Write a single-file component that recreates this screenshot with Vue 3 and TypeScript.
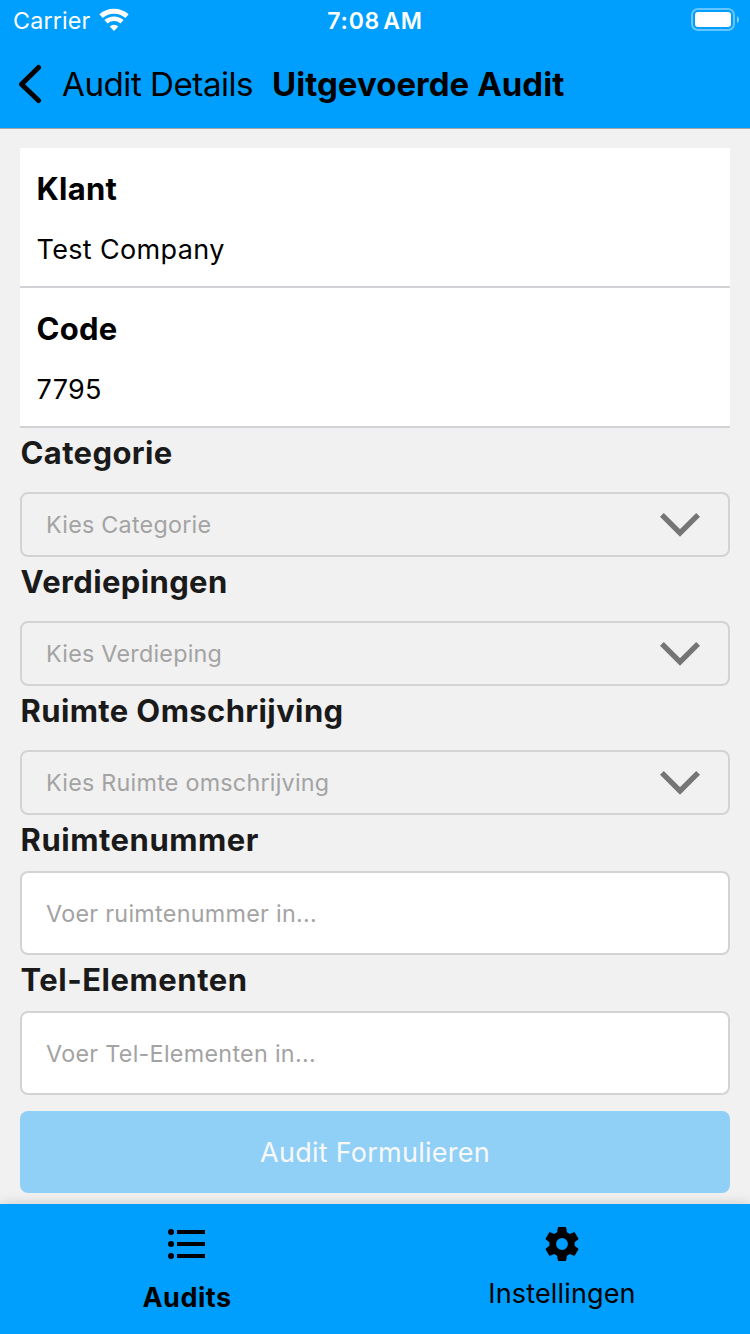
<script setup lang="ts">
import { ref } from 'vue'

interface Info { title: string; value: string; v: string }
interface Field { label: string; hint: string; kind: 'select' | 'input'; l: string }

const info: Info[] = [
  { title: 'Klant', value: 'Test Company', v: 'company' },
  { title: 'Code', value: '7795', v: 'number' },
]
const fields: Field[] = [
  { label: 'Categorie', hint: 'Kies Categorie', kind: 'select', l: 'normal' },
  { label: 'Verdiepingen', hint: 'Kies Verdieping', kind: 'select', l: 'normal' },
  { label: 'Ruimte Omschrijving', hint: 'Kies Ruimte omschrijving', kind: 'select', l: 'normal' },
  { label: 'Ruimtenummer', hint: 'Voer ruimtenummer in...', kind: 'input', l: 'wide' },
  { label: 'Tel-Elementen', hint: 'Voer Tel-Elementen in...', kind: 'input', l: 'wide' },
]
const activeTab = ref<'audits' | 'settings'>('audits')
</script>

<template>
  <div class="screen">
    <header class="top">
      <div class="status">
        <div class="carrier">
          <span class="carrier-name">Carrier</span>
          <svg class="wifi" width="30" height="24" viewBox="0 0 30 24">
            <g fill="none" stroke="#fff">
              <path d="M2 8.2A19.7 19.7 0 0 1 28 8.2" stroke-width="5" />
              <path d="M6.95 13.85A12.2 12.2 0 0 1 23.05 13.85" stroke-width="4.6" />
            </g>
            <path d="M15 23L10.7 18.4A6.3 6.3 0 0 1 19.3 18.4Z" fill="#fff" />
          </svg>
        </div>
        <span class="clock">7:08 AM</span>
        <svg class="battery" width="50" height="24" viewBox="0 0 50 24">
          <rect x="2" y="1" width="42" height="21" rx="6" fill="none" stroke="#fff" stroke-opacity=".4" stroke-width="2" />
          <rect x="5" y="4" width="36" height="15" rx="3" fill="#fff" />
          <path d="M47 8Q49 9 49 11.5T47 15Z" fill="#fff" fill-opacity=".5" />
        </svg>
      </div>
      <nav class="nav">
        <svg class="back" width="26" height="42" viewBox="0 0 26 42">
          <path d="M22.5 4.5L5.5 21.2L22.5 37.5" fill="none" stroke="#000" stroke-width="5" stroke-linecap="round" stroke-linejoin="round" />
        </svg>
        <span class="back-label">Audit Details</span>
        <h1 class="title">Uitgevoerde Audit</h1>
      </nav>
    </header>

    <main class="content">
      <section v-for="row in info" :key="row.title" class="info">
        <h2 class="info-title">{{ row.title }}</h2>
        <p class="info-value" :class="row.v">{{ row.value }}</p>
      </section>

      <div v-for="f in fields" :key="f.label" class="field" :class="f.kind">
        <div class="label" :class="f.l">{{ f.label }}</div>
        <div class="box">
          <span class="hint">{{ f.hint }}</span>
          <svg v-if="f.kind === 'select'" class="chevron" width="40" height="26" viewBox="0 0 40 26">
            <path d="M1.9 2.8L20 20.9L38.1 2.8" fill="none" stroke="#757575" stroke-width="5.4" />
          </svg>
        </div>
      </div>

      <button class="submit" disabled><span>Audit Formulieren</span></button>
    </main>

    <footer class="tabs">
      <div class="tab" :class="{ active: activeTab === 'audits' }" @click="activeTab = 'audits'">
        <svg width="48" height="48" viewBox="0 0 24 24">
          <path d="M7 5h14v2H7zM7 11h14v2H7zM7 17h14v2H7z" />
          <circle cx="4" cy="6" r="1.5" /><circle cx="4" cy="12" r="1.5" /><circle cx="4" cy="18" r="1.5" />
        </svg>
        <span class="tab-label">Audits</span>
      </div>
      <div class="tab" :class="{ active: activeTab === 'settings' }" @click="activeTab = 'settings'">
        <svg width="48" height="48" viewBox="-2.2 -2.2 28.4 28.4">
          <path d="M12 15.5A3.5 3.5 0 0 1 8.5 12 3.5 3.5 0 0 1 12 8.5 3.5 3.5 0 0 1 15.5 12 3.5 3.5 0 0 1 12 15.5M19.43 12.97C19.47 12.65 19.5 12.33 19.5 12S19.47 11.34 19.43 11L21.54 9.37C21.73 9.22 21.78 8.95 21.66 8.73L19.66 5.27C19.54 5.05 19.27 4.96 19.05 5.05L16.56 6.05C16.04 5.66 15.5 5.32 14.87 5.07L14.5 2.42C14.46 2.18 14.25 2 14 2H10C9.75 2 9.54 2.18 9.5 2.42L9.13 5.07C8.5 5.32 7.96 5.66 7.44 6.05L4.95 5.05C4.73 4.96 4.46 5.05 4.34 5.27L2.34 8.73C2.21 8.95 2.27 9.22 2.46 9.37L4.57 11C4.53 11.34 4.5 11.67 4.5 12S4.53 12.65 4.57 12.97L2.46 14.63C2.27 14.78 2.21 15.05 2.34 15.27L4.34 18.73C4.46 18.95 4.73 19.03 4.95 18.95L7.44 17.94C7.96 18.34 8.5 18.68 9.13 18.93L9.5 21.58C9.54 21.82 9.75 22 10 22H14C14.25 22 14.46 21.82 14.5 21.58L14.87 18.93C15.5 18.67 16.04 18.34 16.56 17.94L19.05 18.95C19.27 19.03 19.54 18.95 19.66 18.73L21.66 15.27C21.78 15.05 21.73 14.78 21.54 14.63Z" />
        </svg>
        <span class="tab-label">Instellingen</span>
      </div>
    </footer>
  </div>
</template>

<style>
body { margin: 0; background: #f1f1f1; }
</style>

<style scoped>
.screen {
  width: 750px;
  height: 1334px;
  display: flex;
  flex-direction: column;
  overflow: hidden;
  background: #f1f1f1;
  color: #000;
  font-family: Inter, "Liberation Sans", sans-serif;
  white-space: nowrap;
}
h1, h2, p { margin: 0; }
svg { display: block; flex: none; }
.top {
  box-sizing: border-box;
  height: 129px;
  flex: none;
  background: #009ffd;
  border-bottom: 1px solid #a5a7aa;
}
.status {
  height: 40px;
  display: grid;
  grid-template-columns: 1fr auto 1fr;
  align-items: center;
  color: #fff;
  font-size: 23.3px;
}
.carrier { display: flex; align-items: center; padding-left: 13px; gap: 9px; }
.carrier-name { width: 77px; letter-spacing: .15px; }
.clock { padding-top: 2px; font-weight: 600; font-size: 23px; letter-spacing: .8px; word-spacing: -3.5px; }
.battery { justify-self: end; margin-right: 10px; }
.nav { height: 88px; display: flex; align-items: center; padding-left: 16px; }
.back-label { width: 210px; margin-left: 20px; font-size: 33.2px; line-height: 88px; letter-spacing: -.5px; }
.title { font-size: 33px; line-height: 88px; font-weight: 700; letter-spacing: .03px; }
.content { padding: 19px 20px 0; height: 1056px; flex: none; }
.info {
  box-sizing: border-box;
  height: 140px;
  padding: 16px 16.5px 0;
  background: #fff;
  border-bottom: 2px solid #d1d1d6;
}
.info-title { font-size: 31px; line-height: 50px; font-weight: 700; letter-spacing: .25px; }
.info-value { font-size: 27px; line-height: 40px; margin-top: 16px; letter-spacing: .35px; }
.label {
  height: 64px;
  padding-left: .5px;
  color: #1a1a1a;
  font-size: 31px;
  line-height: 50px;
  font-weight: 700;
  letter-spacing: .38px;
}
.label.wide { letter-spacing: .53px; }
.input .label { height: 56px; }
.box {
  box-sizing: border-box;
  height: 65px;
  display: flex;
  align-items: center;
  justify-content: space-between;
  padding: 0 28px 0 24px;
  border: 2px solid #d3d3d3;
  border-radius: 8px;
}
.input .box { height: 84px; background: #fff; }
.hint { color: #a3a3a3; font-size: 23.3px; letter-spacing: .25px; }
.input .hint { letter-spacing: .3px; }
.submit {
  display: block;
  width: 710px;
  height: 82px;
  margin-top: 16px;
  padding: 0;
  border: 0;
  border-radius: 8px;
  background: #91d0f6;
  color: #f8f8f8;
  font-family: inherit;
  font-size: 27px;
  letter-spacing: .25px;
}
.tabs {
  margin-top: auto;
  height: 130px;
  flex: none;
  display: grid;
  grid-template-columns: 374px 376px;
  background: #009ffd;
  box-shadow: 0 0 12px rgba(0, 0, 0, .16);
}
.tab { display: flex; flex-direction: column; align-items: center; padding-top: 16px; }
.tab-label { font-size: 27px; line-height: 40px; margin-top: 6px; letter-spacing: .15px; }
.active .tab-label { font-weight: 700; margin-top: 10px; letter-spacing: .5px; }
</style>
